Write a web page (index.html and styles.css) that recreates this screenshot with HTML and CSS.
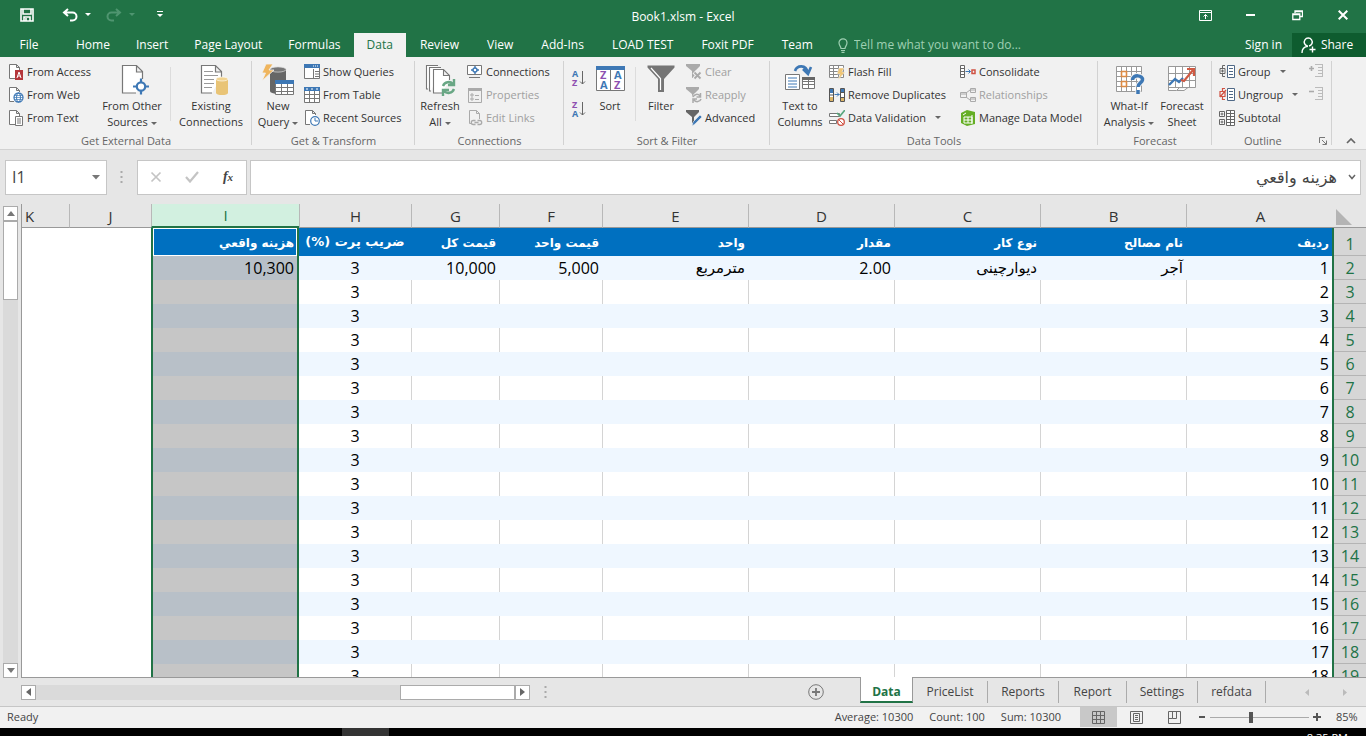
FILE: index.html
```html
<!DOCTYPE html>
<html lang="en">
<head>
<meta charset="utf-8">
<title>Book1.xlsm - Excel</title>
<link rel="stylesheet" href="styles.css">
</head>
<body>
<header class="titlebar">
  <div class="quick">
    <button class="qbtn save" aria-label="Save"><svg width="14" height="14" viewBox="0 0 14 14"><path d="M1 1h12v12H1zM3 1v5h8V1M4 13V9h6v4M6 10v3" fill="none" stroke="#fff" stroke-width="1.600"/></svg></button>
    <button class="qbtn" aria-label="Undo"><svg width="16" height="14" viewBox="0 0 16 14"><path d="M6 1L2 4.500l4 3.500M2 4.500h8.500a4 4 0 0 1 0 8H8" fill="none" stroke="#fff" stroke-width="2"/></svg></button>
    <button class="qcaret" aria-label="Undo list"><svg width="6" height="4"><path d="M0 0h6L3 3z" fill="#fff"/></svg></button>
    <button class="qbtn redo" aria-label="Redo"><svg width="16" height="14" viewBox="0 0 16 14"><path d="M10 1l4 3.500-4 3.500M14 4.500H5.500a4 4 0 0 0 0 8H8" fill="none" stroke="#4f9570" stroke-width="2"/></svg></button>
    <button class="qcaret" aria-label="Redo list"><svg width="6" height="4"><path d="M0 0h6L3 3z" fill="#4f9570"/></svg></button>
    <button class="qmore" aria-label="Customize toolbar"><svg width="6" height="7"><path d="M0 .5h6" stroke="#fff"/><path d="M0 3h6L3 6z" fill="#fff"/></svg></button>
  </div>
  <h1 class="doc-title">Book1.xlsm - Excel</h1>
  <div class="window-controls">
    <button aria-label="Ribbon display options"><svg width="13" height="11"><path d="M.5.500h12v10H.5zM.5 2.500h12M6.500 9V4.500M4.500 6.500l2-2 2 2" fill="none" stroke="#fff"/></svg></button>
    <button aria-label="Minimize"><svg width="10" height="4"><path d="M0 2h9" stroke="#fff" stroke-width="2"/></svg></button>
    <button aria-label="Restore"><svg width="11" height="11"><path d="M3 3V1h7.500v5.500H8M.8 4h7v5.500h-7zM.8 4.600h7M3 1.500h7" fill="none" stroke="#fff" stroke-width="1.300"/></svg></button>
    <button aria-label="Close"><svg width="10" height="10"><path d="M.7.700l8.600 8.600M9.300.7L.7 9.300" stroke="#fff" stroke-width="2"/></svg></button>
  </div>
</header>

<nav class="tabs" aria-label="Ribbon tabs">
  <button class="tab file">File</button>
  <button class="tab">Home</button>
  <button class="tab">Insert</button>
  <button class="tab">Page Layout</button>
  <button class="tab">Formulas</button>
  <button class="tab active">Data</button>
  <button class="tab">Review</button>
  <button class="tab">View</button>
  <button class="tab">Add-Ins</button>
  <button class="tab">LOAD TEST</button>
  <button class="tab">Foxit PDF</button>
  <button class="tab">Team</button>
  <label class="tell"><svg width="10" height="15" viewBox="0 0 10 15"><path d="M3 10.500C3 8.500 1 7.500 1 4.800a4 4 0 0 1 8 0C9 7.500 7 8.500 7 10.500zM3 12.500h4M3.500 14.300h3" fill="none" stroke="#9fd0b3" stroke-width="1.200"/></svg><input type="text" aria-label="Tell me" placeholder="Tell me what you want to do..."></label>
  <button class="signin">Sign in</button>
  <button class="share"><svg width="16" height="17" viewBox="0 0 16 17"><path d="M6.500 9a4 4 0 1 1 1.500 0M1 16c0-4 2-6.500 6-6.800M11.500 9.500v6M8.500 12.500h6" fill="none" stroke="#fff" stroke-width="1.400"/></svg>Share</button>
</nav>

<section class="ribbon" aria-label="Data">
  <div class="group g-external">
    <div class="tools">
      <div class="stack">
        <button class="small"><svg class="ic" viewBox="0 0 16 16"><path d="M7 14.500H1.500V.5h7l3 3V6M8.500.5v3h3" fill="#fff" stroke="#777"/><path d="M7 6h8v10H7z" fill="#b5373c"/><path d="M9 14l2-6 2 6M9.800 12h2.400" stroke="#fff" fill="none"/></svg>From Access</button>
        <button class="small"><svg class="ic" viewBox="0 0 16 16"><path d="M6 14.500H1.500V.5h7l3 3V5M8.500.5v3h3" fill="#fff" stroke="#777"/><circle cx="10.500" cy="10.500" r="4.500" fill="#fff" stroke="#3e78b5" stroke-width="1.300"/><ellipse cx="10.500" cy="10.500" rx="2" ry="4.500" fill="none" stroke="#3e78b5"/><path d="M6 10.500h9M7 8.500h7M7 12.500h7" stroke="#3e78b5" stroke-width=".7"/></svg>From Web</button>
        <button class="small"><svg class="ic" viewBox="0 0 16 16"><path d="M7 14.500H1.500V.5h7l3 3V6M8.500.5v3h3M7.500 6.500h7v9h-7zM9 9h4M9 11h4M9 13h4" fill="#fff" stroke="#777"/></svg>From Text</button>
      </div>
      <button class="big"><svg class="big-ic" viewBox="0 0 32 32"><path d="M20 29H6.500V1.500h14l6 6V15M20.500 1.500v6.500h6" fill="#fff" stroke="#777" stroke-width="1.200"/><circle cx="25" cy="22.500" r="4.200" fill="#fff" stroke="#3e78b5" stroke-width="2.200"/><path d="M25 14.500v4M25 26.500v4M17 22.500h4M29 22.500h4" stroke="#3e78b5" stroke-width="2.200"/></svg><span>From Other<br>Sources<i class="caret"></i></span></button>
      <span class="rule"></span>
      <button class="big"><svg class="big-ic" viewBox="0 0 32 32"><path d="M17 29H6.500V1.500h14l6 6V13M20.500 1.500v6.500h6" fill="#fff" stroke="#777" stroke-width="1.200"/><path d="M9 7.500h9M9 11.500h14M9 15.500h10M9 19.500h10M9 23.500h8" stroke="#999"/><path d="M21 15v14a6 2 0 0 0 12 0V15z" fill="#e9c476"/><ellipse cx="27" cy="15" rx="6" ry="2" fill="#f1d391" stroke="#fff" stroke-width=".6"/></svg><span>Existing<br>Connections</span></button>
    </div>
    <h2>Get External Data</h2>
  </div>

  <div class="group g-transform">
    <div class="tools">
      <button class="big"><svg class="big-ic" viewBox="0 0 32 32"><path d="M8 5v22a8 3 0 0 0 16 0V5z" fill="#666"/><ellipse cx="16" cy="5.500" rx="8" ry="2.600" fill="#777" stroke="#ddd" stroke-width=".7"/><path d="M4 0h7L7 6h5L0 17l3.500-8H0z" fill="#efb55e" stroke="#f1f1f1" stroke-width=".8"/><path d="M13.500 16.500h18v14h-18z" fill="#fff" stroke="#777"/><path d="M13 16h19v4H13z" fill="#3e78b5"/><path d="M14 23.500h18M14 27.500h18M19.500 20v11M25.500 20v11" stroke="#777"/></svg><span>New<br>Query<i class="caret"></i></span></button>
      <div class="stack">
        <button class="small"><svg class="ic" viewBox="0 0 16 16"><path d="M.5.500h15v14H.5zM11 7.500h4M11 10h4M11 12.500h4M9.500 5v9" fill="#fff" stroke="#777"/><path d="M0 0h16v4H0z" fill="#3e78b5"/><path d="M9 2h1M11 2h1M13 2h1" stroke="#fff"/></svg>Show Queries</button>
        <button class="small"><svg class="ic" viewBox="0 0 16 16"><path d="M.5.500h15v15H.5zM.5 7.500h15M.5 11.500h15M5.500 4v11M10.500 4v11" fill="#fff" stroke="#777"/><path d="M0 0h16v4H0z" fill="#3e78b5"/><path d="M2 2h2M7 2h2M12 2h2" stroke="#fff"/></svg>From Table</button>
        <button class="small"><svg class="ic" viewBox="0 0 16 16"><path d="M6 14.500H1.500V.5h7l3 3V5M8.500.5v3h3" fill="#fff" stroke="#777"/><circle cx="11" cy="11" r="4.300" fill="#fff" stroke="#3e78b5" stroke-width="1.200"/><path d="M11 8v3h3" fill="none" stroke="#3e78b5"/></svg>Recent Sources</button>
      </div>
    </div>
    <h2>Get &amp; Transform</h2>
  </div>

  <div class="group g-connections">
    <div class="tools">
      <button class="big"><svg class="big-ic" viewBox="0 0 32 32"><path d="M4 25H2.500V1.500H14M7 27H5.500V3.500H17M18 29H9.500V5.500h10l6 6V16M19.500 5.500v6h6" fill="#fff" stroke="#777" stroke-width="1.100"/><path d="M19 22a6 6 0 0 1 10-2M30 15v6h-6M30 25a6 6 0 0 1-10 2M19 32v-6h6" fill="none" stroke="#69a785" stroke-width="2.400"/></svg><span>Refresh<br>All<i class="caret"></i></span></button>
      <div class="stack">
        <button class="small"><svg class="ic" viewBox="0 0 16 16"><path d="M.5 1.500h14v9H.5zM2 13.500h11" fill="#fff" stroke="#777"/><circle cx="8" cy="6" r="2" fill="none" stroke="#3e78b5" stroke-width="1.400"/><path d="M8 2v2M8 8v2M4 6h2M10 6h2" stroke="#3e78b5" stroke-width="1.400"/></svg>Connections</button>
        <button class="small off" disabled><svg class="ic" viewBox="0 0 16 16"><path d="M1.500 1.500h13v14h-13z" fill="#f0f0f0" stroke="#aaa"/><path d="M1 1h14v3H1z" fill="#aaa"/><path d="M4 7h2v2H4zM4 11h2v2H4zM8 8.500h4M8 12.500h4" fill="none" stroke="#aaa"/></svg>Properties</button>
        <button class="small off" disabled><svg class="ic" viewBox="0 0 16 16"><path d="M5 13.500H2.500V.5h7l3 3V9M9.500.5v3h3" fill="none" stroke="#aaa"/><path d="M8.500 14.500H6.300a2 2 0 0 1 0-4h2.200M10.500 10.500h2.200a2 2 0 0 1 0 4h-2.200M7.500 12.500h4" fill="none" stroke="#aaa" stroke-width="1.300"/></svg>Edit Links</button>
      </div>
    </div>
    <h2>Connections</h2>
  </div>

  <div class="group g-sort">
    <div class="tools">
      <div class="az">
        <button aria-label="Sort A to Z"><svg width="16" height="18" viewBox="0 0 16 18"><text x="1" y="8" class="ltr blue">A</text><text x="1" y="17" class="ltr purple">Z</text><path d="M11.500 2v13M9 12.500l2.500 2.500 2.500-2.500" fill="none" stroke="#666"/></svg></button>
        <button aria-label="Sort Z to A"><svg width="16" height="18" viewBox="0 0 16 18"><text x="1" y="8" class="ltr purple">Z</text><text x="1" y="17" class="ltr blue">A</text><path d="M11.500 2v13M9 12.500l2.500 2.500 2.500-2.500" fill="none" stroke="#666"/></svg></button>
      </div>
      <button class="big"><svg class="big-ic" viewBox="0 0 32 32"><path d="M2.500 3.500h28v23h-28zM16.500 5v21" fill="#fff" stroke="#777"/><path d="M2 2h29v4H2z" fill="#3e78b5"/><text x="6" y="15" class="ltr big-l purple">Z</text><text x="6" y="25" class="ltr big-l blue">A</text><text x="20" y="15" class="ltr big-l blue">A</text><text x="20" y="25" class="ltr big-l purple">Z</text></svg><span>Sort</span></button>
      <span class="rule"></span>
      <button class="big"><svg class="big-ic" viewBox="0 0 32 32"><path d="M2.500 1.500h27v2L19 15v13h-6V15L2.500 3.500z" fill="#757575"/><path d="M6 4l9.500 10.500V26" fill="none" stroke="#fff" stroke-width="1.200"/></svg><span>Filter</span></button>
      <div class="stack">
        <button class="small off" disabled><svg class="ic" viewBox="0 0 16 16"><path d="M0 0h14v2L9 7v7H6V7L0 2z" fill="#aaa"/><path d="M8 8l7 7M15 8l-7 7" stroke="#f0f0f0" stroke-width="4"/><path d="M8.500 8.500l6 6M14.500 8.500l-6 6" stroke="#aaa" stroke-width="1.800"/></svg>Clear</button>
        <button class="small off" disabled><svg class="ic" viewBox="0 0 16 16"><path d="M0 0h13v2L8 7v5H6V7L0 2z" fill="#aaa"/><circle cx="11" cy="11" r="5" fill="#f0f0f0"/><path d="M7 10a4 4 0 0 1 7-1M14.500 6v4h-4M15 12a4 4 0 0 1-7 1M7 16v-4h4" fill="none" stroke="#aaa" stroke-width="1.500"/></svg>Reapply</button>
        <button class="small"><svg class="ic" viewBox="0 0 16 16"><path d="M0 0h13v2L8 7v6H6V7L0 2z" fill="#666"/><path d="M6 16l1-4 7-7 2 2-7 7z" fill="#3e78b5" stroke="#f0f0f0" stroke-width=".6"/></svg>Advanced</button>
      </div>
    </div>
    <h2>Sort &amp; Filter</h2>
  </div>

  <div class="group g-data">
    <div class="tools">
      <button class="big"><svg class="big-ic" viewBox="0 0 32 32"><path d="M1.500 10.500h14v15h-14z" fill="#fff" stroke="#777"/><path d="M4 14h9M4 17h9M4 20h9M4 23h9" stroke="#3e78b5"/><path d="M18.500 13.500h12v11h-12zM18.500 17.500h12M18.500 20.500h12M24.500 14v10" fill="#fff" stroke="#777"/><path d="M18 13h13v3H18z" fill="#666"/><path d="M11 7c2-6 11-7 13 2M19 5l5 5 3-7" fill="none" stroke="#3e78b5" stroke-width="2.600"/></svg><span>Text to<br>Columns</span></button>
      <div class="stack">
        <button class="small"><svg class="ic" viewBox="0 0 16 16"><path d="M.5 1.500h14v12H.5zM.5 4.500h14M.5 7.500h14M.5 10.500h14M4.500 1.500v12M9.500 1.500v12" fill="#fff" stroke="#888"/><path d="M10 4h5l-2 4h3l-7 8 2-6H8z" fill="#efc575" stroke="#f1f1f1" stroke-width=".5"/></svg>Flash Fill</button>
        <button class="small"><svg class="ic" viewBox="0 0 16 16"><path d="M.5 1.500h4v13h-4zM11.500 1.500h4v13h-4zM.5 8h4M11.500 5.500h4M11.500 10.500h4" fill="#fff" stroke="#555"/><path d="M1 2h3v4H1zM12 2h3v3h-3z" fill="#3e78b5"/><path d="M1 10h3v4H1zM12 11h3v3h-3z" fill="#dcb568"/><path d="M5.500 7.500h5M8 5.500l2 2-2 2" fill="none" stroke="#3e78b5"/></svg>Remove Duplicates</button>
        <button class="small"><svg class="ic" viewBox="0 0 16 16"><path d="M.5 3.500h10v3H.5zM.5 10.500h7v3h-7z" fill="#fff" stroke="#777"/><path d="M8 3l3 3 5-6" fill="none" stroke="#58a67c" stroke-width="1.700"/><circle cx="12" cy="12" r="3.300" fill="#fff" stroke="#d05243" stroke-width="1.300"/><path d="M10 10l4 4" stroke="#d05243"/></svg>Data Validation<i class="caret far"></i></button>
      </div>
      <div class="stack">
        <button class="small"><svg class="ic" viewBox="0 0 16 16"><path d="M.5 1.500h4v12h-4zM.5 4.500h4M.5 7.500h4M.5 10.500h4" fill="#fff" stroke="#666"/><path d="M5.500 7.500h5M8.500 5.500l2 2-2 2" fill="none" stroke="#3e78b5"/><path d="M12 6h3v3.500h-3z" fill="none" stroke="#d05243" stroke-width="1.500"/></svg>Consolidate</button>
        <button class="small off" disabled><svg class="ic" viewBox="0 0 16 16"><path d="M.5 5.500h6v5h-6zM10.500 1.500h5v4h-5zM10.500 10.500h5v4h-5zM6 6l4-3M6 10l4 3M1 7h5M11 3h4M11 12h4" fill="none" stroke="#aaa"/></svg>Relationships</button>
        <button class="small"><svg class="ic" viewBox="0 0 16 16"><path d="M1 3l6-3 8 2v12l-8 2-6-3z" fill="#65ae25"/><path d="M3 5l3-2M4 7h8v6H4zM4 10h8M8 7v6M12 5v9" fill="none" stroke="#fff"/></svg>Manage Data Model</button>
      </div>
    </div>
    <h2>Data Tools</h2>
  </div>

  <div class="group g-forecast">
    <div class="tools">
      <button class="big"><svg class="big-ic" viewBox="0 0 32 32"><path d="M3.500 2.500h25v25h-25zM3.500 7.500h25M3.500 12.500h25M3.500 17.500h25M3.500 22.500h25M8.500 3v24M13.500 3v24M18.500 3v24M23.500 3v24" fill="#fff" stroke="#999"/><path d="M8.500 7.500h5v5h-5zM8.500 17.500h5v5h-5z" fill="#fff" stroke="#dc8b45" stroke-width="1.600"/><path d="M19.500 16c0-6 11-5 10 0-.5 3-4.500 3-4.500 7M25 26v4" fill="none" stroke="#f1f1f1" stroke-width="5.500"/><path d="M19.500 16c0-6 11-5 10 0-.5 3-4.500 3-4.500 7M25 26v4" fill="none" stroke="#3e78b5" stroke-width="3.500"/></svg><span>What-If<br>Analysis<i class="caret"></i></span></button>
      <button class="big"><svg class="big-ic" viewBox="0 0 32 32"><path d="M2.500 2.500h27v21h-27zM2.500 9.500h27M2.500 16.500h27M9.500 3v20M16.500 3v20M23.500 3v20M2.500 23v3.500h8l3-3M11 26.500h7l4-3" fill="#fff" stroke="#999"/><path d="M3 21l6-6 4 3 4-4" fill="none" stroke="#3e78b5" stroke-width="2.400"/><path d="M15 16l3 1 9-11M21 5h7v7" fill="none" stroke="#d05a43" stroke-width="2.200"/></svg><span>Forecast<br>Sheet</span></button>
    </div>
    <h2>Forecast</h2>
  </div>

  <div class="group g-outline">
    <div class="tools">
      <div class="stack">
        <button class="small"><svg class="ic" viewBox="0 0 16 16"><path d="M1 4.500h5v5H1zM2 7h3M3.500 5.500v3M6 1.500H3.500V4M3.500 10v2.500H6" fill="none" stroke="#666"/><path d="M8.500 1.500h7v12h-7zM10 4.500h4M10 7.500h4M10 10.500h4" fill="#fff" stroke="#4f6987"/></svg>Group<i class="caret far"></i></button>
        <button class="small"><svg class="ic" viewBox="0 0 16 16"><path d="M1 4.500h5v5H1zM1 10l6-7M6 1.500H3.500V4M3.500 10v2.500H6" fill="none" stroke="#d05243" stroke-width="1.200"/><path d="M8.500 1.500h7v12h-7zM10 4.500h4M10 7.500h4M10 10.500h4" fill="#fff" stroke="#4f6987"/></svg>Ungroup<i class="caret far"></i></button>
        <button class="small"><svg class="ic" viewBox="0 0 16 16"><path d="M.5 1.500h5v5h-5zM1.500 4h3M3 2.500v3M.5 9.500h5v5h-5zM1.500 12h3M3 10.500v3M7.500.500h8v15h-8zM7.500 3.500h8M7.500 6.500h8M7.500 9.500h8M7.500 12.500h8M11.500.5v15" fill="#fff" stroke="#666"/></svg>Subtotal</button>
      </div>
      <div class="stack">
        <button class="small off" disabled aria-label="Show detail"><svg class="ic" viewBox="0 0 16 16"><path d="M1 4.500h5M3.500 2v5" stroke="#aaa" stroke-width="1.600"/><path d="M7 .5h8M10 3.500h5M10 6.500h5M10 9.500h5M7 12.500h8M14.500 1v12" stroke="#bbb"/></svg></button>
        <button class="small off" disabled aria-label="Hide detail"><svg class="ic" viewBox="0 0 16 16"><path d="M1 4.500h5" stroke="#aaa" stroke-width="1.600"/><path d="M7 .5h8M10 3.500h5M10 6.500h5M10 9.500h5M7 12.500h8M14.500 1v12" stroke="#bbb"/></svg></button>
      </div>
    </div>
    <div class="foot"><h2>Outline</h2><button aria-label="Outline settings"><svg width="8" height="8"><path d="M.5 6V.5H6M3 3l4 4M7.500 3.500v4h-4" fill="none" stroke="#777"/></svg></button></div>
  </div>
  <button class="collapse" aria-label="Collapse ribbon"><svg width="10" height="6"><path d="M1 5l4-4 4 4" fill="none" stroke="#666" stroke-width="1.700"/></svg></button>
</section>

<section class="formula-row" aria-label="Formula bar">
  <div class="namebox"><input type="text" aria-label="Name box" value="I1"><button aria-label="Names"><svg width="8" height="5"><path d="M0 0h8L4 4.500z" fill="#777"/></svg></button></div>
  <svg class="dots" width="3" height="12"><path d="M1.500 0v2M1.500 5v2M1.500 10v2" stroke="#aaa" stroke-width="2"/></svg>
  <div class="fx-box">
    <button aria-label="Cancel"><svg width="12" height="12"><path d="M1.500 1.500l9 9M10.500 1.500l-9 9" stroke="#c4c4c4" stroke-width="1.700"/></svg></button>
    <button aria-label="Enter"><svg width="14" height="12"><path d="M1 6l4 4.500L13 1" fill="none" stroke="#c4c4c4" stroke-width="2.200"/></svg></button>
    <button aria-label="Insert function" class="fx">f<small>x</small></button>
  </div>
  <div class="formula"><input type="text" dir="rtl" lang="fa" aria-label="Formula" value="هزينه واقعي"><button aria-label="Expand formula bar"><svg width="8" height="6"><path d="M1 1l3 3.500L7 1" fill="none" stroke="#666" stroke-width="1.500"/></svg></button></div>
</section>

<main class="sheet-area">
  <div class="vscroll">
    <button aria-label="Scroll up"><svg width="8" height="5"><path d="M0 5h8L4 0z" fill="#777"/></svg></button>
    <div class="vthumb"></div><div class="vtrack"></div>
    <button aria-label="Scroll down"><svg width="8" height="5"><path d="M0 0h8L4 5z" fill="#777"/></svg></button>
  </div>
  <div class="sheet">
    <table dir="rtl">
      <colgroup><col class="c-num"><col class="c-a"><col class="c-w"><col class="c-w"><col class="c-w"><col class="c-w"><col class="c-f"><col class="c-g"><col class="c-h"><col class="c-i"><col class="c-j"><col></colgroup>
      <thead><tr><th class="corner" aria-label="Select all"><svg width="16" height="16"><path d="M0 0v16h16z" fill="#b4b4b4"/></svg></th><th>A</th><th>B</th><th>C</th><th>D</th><th>E</th><th>F</th><th>G</th><th>H</th><th class="picked">I</th><th>J</th><th class="cut">K</th></tr></thead>
      <tbody id="rows">
        <tr class="names" lang="fa"><th>1</th><td class="a">ردیف</td><td>نام مصالح</td><td>نوع کار</td><td>مقدار</td><td>واحد</td><td>قیمت واحد</td><td>قیمت کل</td><td class="h">ضریب پرت (%)</td><td class="i">هزینه واقعي</td><td class="blank"></td><td class="blank"></td></tr>
        <tr class="band"><th>2</th><td class="a">1</td><td class="fa">آجر</td><td class="fa">دیوارچینی</td><td>2.00</td><td class="fa">مترمربع</td><td>5,000</td><td>10,000</td><td class="h">3</td><td class="i">10,300</td><td class="blank"></td><td class="blank"></td></tr>
      </tbody>
    </table>
  </div>
</main>

<footer class="bottom">
  <div class="sheetbar">
    <div class="hscroll">
      <button aria-label="Scroll left"><svg width="5" height="8"><path d="M5 0v8L0 4z" fill="#666"/></svg></button>
      <div class="htrack"></div><div class="hthumb"></div>
      <button aria-label="Scroll right"><svg width="5" height="8"><path d="M0 0v8l5-4z" fill="#666"/></svg></button>
    </div>
    <svg class="dots" width="3" height="12"><path d="M1.500 0v2M1.500 5v2M1.500 10v2" stroke="#aaa" stroke-width="2"/></svg>
    <span class="grow"></span>
    <button class="add" aria-label="New sheet"><svg width="16" height="16"><circle cx="8" cy="8" r="7.300" fill="none" stroke="#777"/><path d="M8 4v8M4 8h8" stroke="#777" stroke-width="1.800"/></svg></button>
    <div class="sheets">
      <button class="stab active">Data</button><button class="stab">PriceList</button><button class="stab">Reports</button><button class="stab">Report</button><button class="stab">Settings</button><button class="stab">refdata</button>
    </div>
    <div class="sheet-nav">
      <button aria-label="Previous sheet"><svg width="4" height="7"><path d="M4 0v7L0 3.500z" fill="#bbb"/></svg></button>
      <button aria-label="Next sheet"><svg width="4" height="7"><path d="M0 0v7l4-3.500z" fill="#bbb"/></svg></button>
    </div>
  </div>
  <div class="status">
    <span>Ready</span><span class="grow"></span>
    <span class="stat">Average: 10300</span><span class="stat">Count: 100</span><span class="stat">Sum: 10300</span>
    <div class="views">
      <button class="on" aria-label="Normal view"><svg width="13" height="13"><path d="M.5.500h12v12H.5zM.5 4.500h12M.5 8.500h12M4.500.5v12M8.500.5v12" fill="none" stroke="#666"/></svg></button>
      <button aria-label="Page layout view"><svg width="13" height="13"><path d="M.5.500h12v12H.5zM3.500 2.500h6v8h-6zM5 4.500h3M5 6.500h3M5 8.500h3" fill="none" stroke="#666"/></svg></button>
      <button aria-label="Page break view"><svg width="13" height="13"><path d="M.5.500h12v12H.5zM4.500.5v7h4v-7M.5 7.500h4" fill="none" stroke="#666"/></svg></button>
    </div>
    <div class="zoom">
      <button aria-label="Zoom out"><svg width="8" height="8"><path d="M1 4h6" stroke="#555" stroke-width="2"/></svg></button>
      <input type="range" min="0" max="100" value="41" aria-label="Zoom">
      <button aria-label="Zoom in"><svg width="8" height="8"><path d="M0 4h8M4 0v8" stroke="#555" stroke-width="2"/></svg></button>
      <span class="pct">85%</span>
    </div>
  </div>
  <div class="taskbar"><span class="task-item"></span><time>8:35 PM</time></div>
</footer>
<script src="script.js"></script>
</body>
</html>
```
FILE: styles.css
```css
* { box-sizing: border-box; }
body {
  margin: 0;
  height: 100vh;
  display: flex;
  flex-direction: column;
  overflow: hidden;
  background: #e6e6e6;
  color: #444;
  font: 11px/16px "Open Sans", "Noto Sans", sans-serif;
}
button, input { font: inherit; color: inherit; background: none; border: 0; padding: 0; margin: 0; outline: 0; }
button { display: flex; align-items: center; justify-content: center; white-space: nowrap; }
svg { display: block; flex: none; }
h1, h2 { margin: 0; font-weight: 400; }
.grow { flex: 1; }

/* Title bar */
.titlebar { flex: 0 0 33px; display: grid; grid-template-columns: 1fr auto 1fr; align-items: center; background: #217346; color: #fff; }
.quick { display: flex; align-items: center; padding: 0 0 4px 19px; }
.qbtn { width: 16px; height: 20px; }
.qbtn.save { margin-right: 27px; }
.qbtn.redo { margin-left: 15px; }
.qcaret { width: 6px; margin-left: 7px; }
.qmore { width: 6px; margin-left: 22px; }
.doc-title { font-size: 12px; }
.window-controls { display: flex; justify-content: flex-end; padding-bottom: 3px; }
.window-controls button { width: 46px; height: 30px; }

/* Ribbon tabs */
.tabs { flex: 0 0 24px; display: flex; background: #217346; color: #fff; font-size: 12px; }
.tab { padding: 0 13px; }
.tab.file { width: 63px; padding: 0 5px 0 0; }
.tab.active { background: #f1f1f1; color: #217346; }
.tab.active ~ .tab { padding: 0 14px; }
.tell { flex: 1; display: flex; align-items: center; gap: 6px; padding-left: 11px; }
.tell input { width: 200px; }
.tell input::placeholder { color: #9fd0b3; opacity: 1; }
.signin { padding: 0 10px; }
.share { width: 74px; gap: 4px; padding-right: 4px; background: #0e5c2f; }

/* Ribbon */
.ribbon { flex: 0 0 93px; display: flex; background: #f1f1f1; border-bottom: 1px solid #d2d2d2; color: #333; }
.group { flex: none; display: flex; flex-direction: column; padding-top: 3px; position: relative; }
.group::after { content: ""; position: absolute; right: 0; top: 4px; bottom: 4px; width: 1px; background: #d2d2d2; }
.tools { display: flex; flex: 1; }
.group h2 { text-align: center; color: #666; font-size: 11px; line-height: 16px; }
.stack { display: flex; flex-direction: column; }
.small { height: 23px; justify-content: flex-start; gap: 3px; }
.ic { width: 16px; height: 16px; }
.off { color: #a0a0a0; }
.big { flex-direction: column; justify-content: flex-start; padding-top: 4px; gap: 2px; }
.big-ic { width: 32px; height: 32px; overflow: visible; }
.caret { display: inline-block; vertical-align: middle; margin-left: 3px; border: 3px solid transparent; border-top-color: #666; border-bottom: 0; }
.caret.far { margin-left: 6px; }
.rule { flex: none; width: 1px; height: 54px; margin: 7px 5px 0; background: #dcdcdc; }
.az svg { overflow: visible; }
.ltr { font: bold 9px "Open Sans", sans-serif; }
.ltr.big-l { font-size: 11px; }
.blue { fill: #3e78b5; }
.purple { fill: #8e50b0; }
.g-external { width: 252px; }
.g-external .tools { padding-left: 8px; }
.g-external .stack { width: 91px; }
.g-external .big { width: 66px; }
.g-external .rule + .big { width: 70px; }
.g-transform { width: 163px; }
.g-transform .tools { padding-left: 4px; }
.g-transform .big { width: 44px; margin-right: 4px; }
.g-connections { width: 149px; }
.g-connections .tools { padding-left: 4px; }
.g-connections .big { width: 42px; margin-right: 6px; }
.g-sort { width: 206px; }
.g-sort .tools { padding-left: 7px; }
.g-sort .big { width: 34px; }
.g-sort .rule { margin: 7px 8px 0; }
.g-sort .stack { margin-left: 8px; }
.az { display: flex; flex-direction: column; gap: 13px; padding-top: 9px; margin-right: 6px; }
.g-data { width: 328px; }
.g-data .tools { padding-left: 5px; }
.g-data .big { width: 50px; margin-right: 4px; }
.g-data .stack:nth-child(2) { width: 131px; }
.g-forecast { width: 114px; }
.g-forecast .tools { gap: 3px; padding-left: 5px; }
.g-forecast .big { width: 52px; }
.g-forecast .big + .big { width: 48px; }
.g-outline { width: 120px; }
.g-outline .tools { padding-left: 7px; }
.g-outline .stack:first-child { width: 89px; }
.foot { display: flex; justify-content: space-between; padding: 0 5px 0 32px; }
.collapse { flex: 1; align-items: flex-end; padding: 0 0 5px 4px; }

/* Formula bar */
.formula-row { flex: 0 0 54px; display: flex; align-items: center; padding: 0 5px; color: #444; }
.namebox, .fx-box, .formula { height: 35px; display: flex; align-items: center; background: #fff; border: 1px solid #c6c6c6; }
.namebox { width: 102px; padding: 0 6px; }
.namebox input { flex: 1; min-width: 0; font-size: 16px; }
.formula-row .dots { margin: 0 14px 0 13px; }
.fx-box { width: 110px; }
.fx-box button { flex: 1; }
.fx-box .fx { font: italic bold 14px "Liberation Serif", serif; }
.fx small { font-size: 11px; }
.formula { flex: 1; margin-left: 3px; padding-right: 4px; }
.formula input { flex: 1; padding-right: 11px; font: 16px "DejaVu Sans", sans-serif; }

/* Grid */
.sheet-area { flex: 1; min-height: 0; display: flex; }
.vscroll { flex: 0 0 21px; display: flex; flex-direction: column; padding: 2px 3px 0; }
.vscroll button { width: 15px; height: 15px; background: #fff; border: 1px solid #ababab; }
.vthumb { width: 15px; height: 79px; background: #fff; border: 1px solid #ababab; }
.vtrack { flex: 1; width: 15px; background: #dadada; }
.sheet { flex: 1; min-width: 0; overflow: hidden; border-bottom: 1px solid #999; }
table { width: 100%; table-layout: fixed; border-collapse: separate; border-spacing: 0; font-size: 16px; line-height: 20px; color: #000; border-left: 1px solid #999; }
.c-num { width: 32px; }
.c-a, .c-i { width: 148px; }
.c-w { width: 146px; }
.c-f { width: 103px; }
.c-g { width: 88px; }
.c-h { width: 112px; }
.c-j { width: 82px; }
th, td { padding: 0; font-weight: 400; white-space: nowrap; overflow: hidden; }
thead th { height: 24px; font-size: 15px; text-align: center; color: #333; background: #e6e6e6; border-left: 1px solid #b8b8b8; border-bottom: 1px solid #999; }
thead .picked { background: #d2f0e0; color: #217346; border-bottom: 2px solid #217346; }
thead .cut { text-align: left; padding-left: 3px; border-left: 0; }
thead .corner { border-left: 0; }
.corner svg { margin: 2px 14px 0 2px; }
tbody tr { height: 24px; }
tbody th { height: 24px; background: #d6d6d6; color: #217346; border-bottom: 1px solid #b4b4b4; }
tbody td { height: 24px; background: #fff; border-left: 1px solid #d4d4d4; text-align: right; padding-right: 3px; }
tbody td.a { border-right: 2px solid #217346; }
tbody td.h { border-left: 0; text-align: center; padding: 0; }
tbody td.i { background: #c6c6c6; border-left: 2px solid #217346; border-right: 2px solid #217346; }
tbody .band td { background: #eff7ff; border-left-color: #eff7ff; }
tbody .band td.i { background: #b8c0c8; border-left-color: #217346; }
tbody .names th { height: 28px; padding-top: 4px; }
tbody .names td { background: #0070c0; border-left-color: #0070c0; color: #fff; font: bold 12px/20px "DejaVu Sans", sans-serif; padding-top: 2px; }
tbody .names td.h { font-size: 13px; padding-top: 0; }
tbody .names td.i { border-left-color: #217346; box-shadow: inset 0 0 0 1px #fff; }
tbody td.blank, tbody .band td.blank, tbody .names td.blank { background: #fff; border-left: 0; }
.fa { font: 15px/20px "DejaVu Sans", sans-serif; }

/* Sheet tabs */
.bottom { flex: none; }
.sheetbar { height: 28px; display: flex; align-items: center; padding-left: 21px; }
.hscroll { width: 509px; height: 15px; display: flex; }
.hscroll button { width: 15px; background: #fff; border: 1px solid #ababab; }
.htrack { flex: 1; background: #dadada; }
.hthumb { width: 115px; background: #fff; border: 1px solid #ababab; }
.sheetbar .dots { margin-left: 14px; }
.add { margin-right: 36px; }
.sheets { display: flex; align-self: flex-start; font-size: 12px; }
.stab { width: 71px; height: 22px; margin-top: 3px; border-right: 1px solid #ababab; }
.stab:nth-child(2) { width: 75px; }
.stab:nth-child(4), .stab:nth-child(6) { width: 68px; }
.stab.active { width: 53px; height: 26px; margin-top: -1px; padding-top: 5px; background: #fff; color: #217346; font-weight: 700; border: 1px solid #999; border-top: 0; border-bottom: 2px solid #217346; }
.sheet-nav { width: 100px; display: flex; gap: 34px; padding-left: 39px; }

/* Status bar and taskbar */
.status { height: 22px; display: flex; align-items: center; padding: 0 0 1px 7px; background: #f1f1f1; border-top: 1px solid #c6c6c6; }
.stat { margin-right: 16px; }
.views { display: flex; align-self: stretch; margin-left: 3px; }
.views button { width: 38px; }
.views .on { width: 37px; background: #c8c8c8; }
.zoom { display: flex; align-items: center; width: 173px; padding-left: 5px; }
.zoom input { appearance: none; width: 99px; height: 12px; margin: 0 4px; background: linear-gradient(#aaa, #aaa) center / 100% 1px no-repeat; }
.zoom input::-webkit-slider-thumb { appearance: none; width: 4px; height: 11px; background: #555; }
.pct { margin-left: 15px; }
.taskbar { height: 8px; overflow: hidden; display: flex; align-items: flex-start; justify-content: space-between; background: #000; color: #fff; padding-right: 18px; }
.task-item { width: 47px; height: 8px; margin-left: 342px; background: #333; }
.taskbar time { padding-top: 2px; }
```
FILE: script.js
```js
// Fill the sheet with the numbered rows below the first record.
const body = document.getElementById("rows");
for (let n = 3; n <= 19; n++) {
  const row = document.createElement("tr");
  if (n % 2 === 0) row.className = "band";
  row.innerHTML = `<th>${n}</th><td class="a">${n - 1}</td>` + "<td></td>".repeat(6) +
    '<td class="h">3</td><td class="i"></td><td class="blank"></td><td class="blank"></td>';
  body.append(row);
}
```
